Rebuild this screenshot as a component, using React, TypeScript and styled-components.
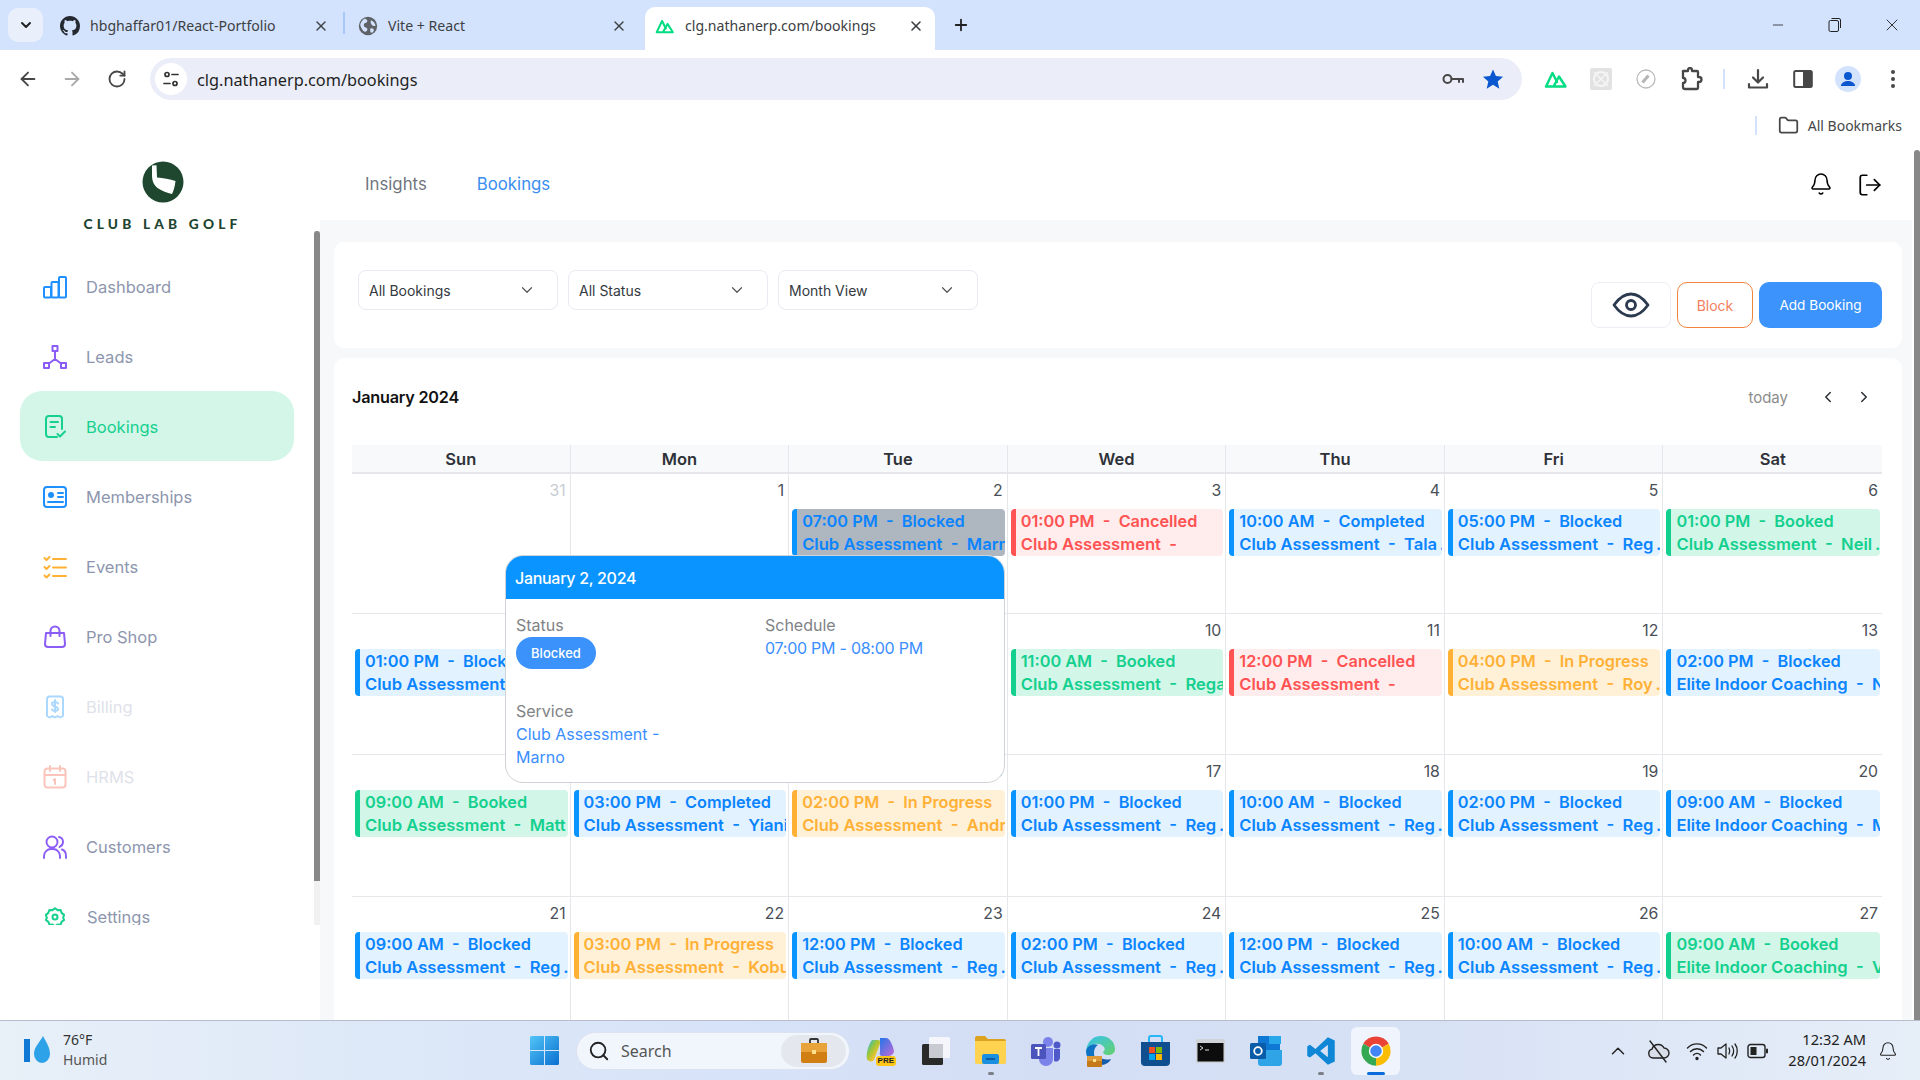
import React from "react";
import styled, { createGlobalStyle } from "styled-components";
import { ArrowLeft, ArrowRight, RotateCw, X, Plus, Minus, ChevronDown, ChevronLeft, ChevronRight, ChevronUp, Bell, LogOut, Search, Folder } from "lucide-react";

const Global = createGlobalStyle`
  html, body { margin: 0; padding: 0; height: 1080px; overflow: hidden; background: #fff; }
  * { box-sizing: border-box; }
  #root { height: 1080px; }
`;

const Screen = styled.div`
  width: 1920px; height: 1080px; display: flex; flex-direction: column; overflow: hidden;
  font-family: "Inter", "Liberation Sans", sans-serif; color: #222;
`;

/* ---------- browser chrome ---------- */
const TabStrip = styled.div`
  height: 50px; background: #d3e3fd; display: flex; align-items: flex-end; flex: none;
  font-family: "Noto Sans", "Liberation Sans", sans-serif;
`;
const TabSearch = styled.div`
  width: 35px; height: 34px; margin: 0 7px 8px 8px; border-radius: 10px; background: #e9f0fc;
  display: flex; align-items: center; justify-content: center; color: #222;
`;
const Tab = styled.div<{ $active?: boolean }>`
  width: 290px; height: 43px; padding: 0 11px 6px 10px; display: flex; align-items: center; gap: 10px;
  border-radius: 10px 10px 0 0; background: ${(p) => (p.$active ? "#fff" : "transparent")};
  margin-left: ${(p) => (p.$active ? "7px" : "0")};
  color: #3c4043; font-size: 14.1px;
`;
const TabIcon = styled.span`
  width: 20px; height: 20px; flex: none; display: flex;
`;
const TabTitle = styled.span`
  flex: 1; white-space: nowrap; overflow: hidden;
`;
const TabDivider = styled.div`
  width: 2px; height: 22px; margin: 0 3px 16px 3px; background: #a8c7fa;
`;
const NewTab = styled.div`
  width: 34px; height: 34px; margin: 0 0 8px 9px; display: flex; align-items: center; justify-content: center; color: #222;
`;
const Spacer = styled.div`
  flex: 1;
`;
const WindowControl = styled.div`
  width: 57px; height: 50px; display: flex; align-items: center; justify-content: center; color: #222; align-self: flex-start;
`;
const Toolbar = styled.div`
  height: 56px; flex: none; background: #fff; display: flex; align-items: center; padding: 2px 5px 0 6px;
  border-radius: 9px 9px 0 0; margin-top: 0;
  font-family: "Noto Sans", "Liberation Sans", sans-serif;
`;
const ToolSlot = styled.div<{ $w?: number }>`
  width: ${(p) => p.$w ?? 45}px; height: 40px; flex: none; display: flex; align-items: center; justify-content: center; color: #474747;
`;
const Omnibox = styled.div`
  flex: 1; height: 42px; margin: 0 11px 0 10px; background: #ebeef8; border-radius: 21px;
  display: flex; align-items: center; padding: 0 9px 0 5px; color: #1f1f1f; font-size: 16.3px;
`;
const SiteChip = styled.span`
  width: 32px; height: 32px; border-radius: 50%; background: #fff; display: flex; align-items: center; justify-content: center; margin-right: 10px;
`;
const UrlText = styled.span`
  flex: 1; padding-top: 2px;
`;
const OmniIcon = styled.span`
  width: 40px; display: flex; justify-content: center;
`;
const ToolDivider = styled.div`
  width: 2px; height: 20px; background: #d3e3fd;
`;
const BookmarkBar = styled.div`
  height: 34px; flex: none; background: #fff; display: flex; align-items: center; justify-content: flex-end; padding: 4px 18px 0 0;
  font-family: "Noto Sans", "Liberation Sans", sans-serif; font-size: 14px; color: #474747; gap: 9px;
`;
const BookmarkDivider = styled.div`
  width: 2px; height: 19px; background: #d3e3fd; margin-right: 12px;
`;

/* ---------- app ---------- */
const Page = styled.div`
  flex: 1; min-height: 0; display: flex; background: #fff;
`;
const Sidebar = styled.aside`
  width: 320px; flex: none; display: flex; flex-direction: column; background: #fff;
`;
const Brand = styled.div`
  height: 91px; flex: none; display: flex; flex-direction: column; align-items: center; padding: 21px 0 0 5px;
`;
const BrandName = styled.div`
  margin-top: 14px; font-family: "Lato", "Liberation Sans", sans-serif; font-weight: 900; font-size: 13.7px; letter-spacing: 4.2px; color: #214530; white-space: nowrap; line-height: 14px;
`;
const NavPane = styled.div`
  height: 694px; display: flex; flex: none;
`;
const Nav = styled.nav`
  width: 314px; overflow: hidden; padding-top: 20px; flex: none;
`;
const NavItem = styled.div<{ $active?: boolean; $muted?: boolean; $gap?: number }>`
  height: 70px; margin: 0 20px; padding: 2px 0 0 23px; display: flex; align-items: center; gap: ${(p) => p.$gap ?? 19}px;
  border-radius: 22px; font-size: 16.5px;
  background: ${(p) => (p.$active ? "#d3f6e9" : "transparent")};
  color: ${(p) => (p.$active ? "#16d08e" : p.$muted ? "#dfe2ea" : "#8d96ae")};
`;
const NavIcon = styled.span`
  width: 24px; height: 24px; flex: none; display: flex; align-items: center; justify-content: center;
`;
const ScrollTrack = styled.div`
  width: 6px; flex: none; background: #f1f1f1;
`;
const ScrollThumb = styled.div<{ $h: number }>`
  width: 6px; height: ${(p) => p.$h}px; background: #888; border-radius: 3px 3px 0 0;
`;
const Main = styled.main`
  flex: 1; min-width: 0; display: flex; flex-direction: column; overflow: hidden;
`;
const TopNav = styled.header`
  height: 80px; flex: none; background: #fff; display: flex; align-items: center; padding: 7px 29px 0 45px; gap: 50px; font-size: 16.8px;
`;
const TopLink = styled.span<{ $active?: boolean }>`
  color: ${(p) => (p.$active ? "#3a8ef0" : "#6f7680")};
`;
const TopIcons = styled.div`
  margin: 3px 0 0 auto; display: flex; gap: 24px; color: #000;
`;
const Body = styled.div`
  flex: 1; min-height: 0; background: #f7f8fa; padding: 22px 10px 0 14px; display: flex; flex-direction: column; gap: 10px;
`;
const FilterCard = styled.section`
  height: 106px; flex: none; background: #fff; border-radius: 10px; padding: 28px 20px 0 24px; display: flex; align-items: flex-start; gap: 10px;
`;
const SelectBox = styled.div`
  width: 200px; height: 40px; border: 1px solid #e8eaf1; border-radius: 8px; display: flex; align-items: center; justify-content: space-between;
  padding: 0 21px 0 10px; font-size: 14px; color: #343a40;
`;
const Actions = styled.div`
  margin: 12px 0 0 auto; display: flex; gap: 6px;
`;
const EyeButton = styled.div`
  width: 80px; height: 46px; border: 1px solid #eceef3; border-radius: 8px; display: flex; align-items: center; justify-content: center;
`;
const BlockButton = styled.div`
  width: 76px; height: 46px; border: 1px solid #f2853d; border-radius: 10px; display: flex; align-items: center; justify-content: center; font-size: 14px; color: #f37f5f;
`;
const AddButton = styled.div`
  width: 123px; height: 46px; border-radius: 10px; background: #3b93fb; display: flex; align-items: center; justify-content: center; font-size: 13.6px; color: #fff;
`;
const CalendarCard = styled.section`
  position: relative; flex: 1; background: #fff; border-radius: 10px 10px 0 0; padding: 24px 20px 0 18px; overflow: hidden;
`;
const CalendarBar = styled.div`
  height: 30px; display: flex; align-items: center; margin-bottom: 33px;
`;
const MonthTitle = styled.h2`
  margin: 0; font-size: 16.2px; font-weight: 600; color: #111; letter-spacing: -0.2px;
`;
const CalendarNav = styled.div`
  margin-left: auto; display: flex; align-items: center; color: #2b2f36; font-size: 15px;
`;
const TodayText = styled.span`
  color: #8d8d8d; margin-right: 22px;
`;
const NavArrow = styled.span`
  width: 36px; display: flex; justify-content: center;
`;
const Month = styled.div`
  display: grid; grid-template-columns: repeat(7, minmax(0, 1fr));
`;
const DayHead = styled.div`
  height: 29px; background: #f8f9fb; border-bottom: 2px solid #e5e7eb; border-right: 1px solid #e5e7eb;
  display: flex; align-items: center; justify-content: center; font-size: 16.5px; font-weight: 600; color: #2e3238;
  &:nth-child(7) { border-right: none; }
`;
const DayCell = styled.div<{ $h: number; $last?: boolean }>`
  height: ${(p) => p.$h}px; border-bottom: 1px solid #e5e7eb; border-right: ${(p) => (p.$last ? "none" : "1px solid #e5e7eb")};
  padding: 0 2px 0 3px; min-width: 0; overflow: hidden;
`;
const DayNumber = styled.div<{ $muted?: boolean }>`
  height: 35px; line-height: 34px; text-align: right; padding-right: 2px; font-size: 15.8px; font-weight: 400;
  color: ${(p) => (p.$muted ? "#c9ccd1" : "#4a4f57")};
`;
const toneMap = {
  blue: { bar: "#0a94ff", bg: "#e3f2ff", fg: "#0a84ff" },
  green: { bar: "#14d08f", bg: "#d2f6e8", fg: "#14d08f" },
  red: { bar: "#ff5252", bg: "#ffecec", fg: "#ff5252" },
  orange: { bar: "#ffb136", bg: "#fff0d8", fg: "#ffb136" },
  selected: { bar: "#0a94ff", bg: "#aeb6bf", fg: "#0a84ff" },
};
type Tone = keyof typeof toneMap;
const EventChip = styled.div<{ $tone: Tone }>`
  height: 47px; border-left: 5px solid ${(p) => toneMap[p.$tone].bar}; background: ${(p) => toneMap[p.$tone].bg}; color: ${(p) => toneMap[p.$tone].fg};
  border-radius: 4px; padding: 1px 0 0 5px; font-size: 16.3px; font-weight: 600; line-height: 23px; white-space: pre; overflow: hidden;
`;
const EventService = styled.div`
  font-size: 16.6px;
`;
const Popover = styled.div`
  position: absolute; left: 171px; top: 197px; width: 500px; height: 228px; background: #fff; border: 1px solid #cfd2d6; border-radius: 18px; overflow: hidden;
`;
const PopHead = styled.div`
  height: 43px; background: #0a94ff; color: #fff; font-size: 16px; font-weight: 500; display: flex; align-items: center; padding-left: 9px; letter-spacing: -0.3px;
`;
const PopBody = styled.div`
  display: grid; grid-template-columns: 249px 1fr; padding: 15px 9px 0 10px; font-size: 16px; line-height: 23px; font-weight: 400; color: #3b8eff;
`;
const PopField = styled.div<{ $span?: boolean }>`
  width: ${(p) => (p.$span ? "170px" : "auto")};
  margin-top: ${(p) => (p.$span ? "31px" : "0")};
`;
const PopLabel = styled.div`
  color: #808285;
`;
const ScheduleTime = styled.span`
  letter-spacing: -0.25px;
`;
const StatusPill = styled.span`
  display: flex; align-items: center; justify-content: center; width: 80px; height: 32px; border-radius: 16px; background: #3b92fb; color: #fff; font-size: 13px; font-weight: 500;
`;
const PageScroll = styled.div`
  width: 8px; flex: none; background: #fff; padding: 10px 0 0 2px;
`;

/* ---------- taskbar ---------- */
const Taskbar = styled.footer`
  height: 60px; flex: none; border-top: 1px solid #b7bdcd; display: grid; grid-template-columns: 517px auto 1fr; align-items: center;
  background: linear-gradient(90deg, #e8f0f8 0%, #dde8f8 20%, #d6e2f8 40%, #d3ddf4 55%, #d8e2f5 75%, #e6eef8 100%);
  font-family: "Noto Sans", "Liberation Sans", sans-serif; color: #222;
`;
const Weather = styled.div`
  display: flex; align-items: center; gap: 9px; padding-left: 24px;
`;
const WeatherText = styled.div`
  font-size: 14px; line-height: 20px; color: #333; padding-bottom: 2px;
`;
const WeatherSub = styled.div`
  color: #555;
`;
const TaskCenter = styled.div`
  display: flex; align-items: center;
`;
const TaskSlot = styled.div<{ $active?: boolean; $w?: number }>`
  position: relative; width: ${(p) => p.$w ?? 55}px; height: 48px; display: flex; align-items: center; justify-content: center;
  &::before { content: ""; position: absolute; left: 3px; right: 3px; top: 0; bottom: 0; border-radius: 6px; background: ${(p) => (p.$active ? "#f0f4fc" : "transparent")}; }
  & > * { position: relative; }
`;
const RunDot = styled.span<{ $wide?: boolean }>`
  position: absolute !important; bottom: 0px; left: 50%; transform: translateX(-50%); width: ${(p) => (p.$wide ? 18 : 6)}px; height: 3px; border-radius: 2px; background: ${(p) => (p.$wide ? "#0a6cdc" : "#7b7f87")};
`;
const SearchPill = styled.div`
  width: 274px; height: 38px; margin-left: 4px; border-radius: 19px; background: #f1f5fc; border: 1px solid #dce3f0; display: flex; align-items: center; padding: 0 3px 0 11px; font-size: 16px; color: #555; gap: 11px;
`;
const SearchBadge = styled.span`
  margin-left: auto; width: 65px; height: 32px; border-radius: 16px; background: #e4e8ee; display: flex; align-items: center; justify-content: center;
`;
const PreLabel = styled.span`
  position: absolute !important; right: 12px; bottom: 9px; padding: 0 2px; background: #ffc617; border-radius: 3px; font-size: 8px; line-height: 10px; font-weight: 700; color: #222; font-family: "Liberation Sans", sans-serif;
`;
const Tray = styled.div`
  display: flex; align-items: center; justify-content: flex-end; padding-right: 22px;
`;
const TraySlot = styled.div<{ $w: number }>`
  width: ${(p) => p.$w}px; display: flex; justify-content: center; color: #222;
`;
const Clock = styled.div`
  width: 88px; text-align: right; font-size: 14.6px; line-height: 21px; color: #222; margin-right: 12px; white-space: nowrap; padding-bottom: 2px;
`;

/* ---------- icons ---------- */
const s = { fill: "none", strokeLinecap: "round" as const, strokeLinejoin: "round" as const };
const NuxtIcon = ({ size = 20 }: { size?: number }) => (
  <svg width={size} height={size} viewBox="0 0 24 24" {...s} stroke="#00dc82" strokeWidth={2.4}>
    <path d="M8 19.5H2L8.5 6l4.5 9" /><path d="M9.5 19.5l5.5-10 6.5 10z" />
  </svg>
);
const GithubIcon = () => (
  <svg width="20" height="20" viewBox="0 0 16 16" fill="#24292f"><path d="M8 0C3.58 0 0 3.58 0 8c0 3.54 2.29 6.53 5.47 7.59.4.07.55-.17.55-.38 0-.19-.01-.82-.01-1.49-2.01.37-2.53-.49-2.69-.94-.09-.23-.48-.94-.82-1.13-.28-.15-.68-.52-.01-.53.63-.01 1.08.58 1.23.82.72 1.21 1.87.87 2.33.66.07-.52.28-.87.51-1.07-1.78-.2-3.64-.89-3.64-3.95 0-.87.31-1.59.82-2.15-.08-.2-.36-1.02.08-2.12 0 0 .67-.21 2.2.82.64-.18 1.32-.27 2-.27s1.36.09 2 .27c1.53-1.04 2.2-.82 2.2-.82.44 1.1.16 1.92.08 2.12.51.56.82 1.27.82 2.15 0 3.07-1.87 3.75-3.65 3.95.29.25.54.73.54 1.48 0 1.07-.01 1.93-.01 2.2 0 .21.15.46.55.38A8.01 8.01 0 0016 8c0-4.42-3.58-8-8-8z" /></svg>
);
const GlobeFill = () => (
  <svg width="20" height="20" viewBox="0 0 24 24"><circle cx="12" cy="12" r="11" fill="#5f6368" /><path d="M8 3c2 1 4 2 3 4s-4 1-4 4 3 2 4 4-1 4-3 4c-2-1-4-4-5-7s2-7 5-9zM16 5c2 1 5 4 5 7-1 0-3 0-4-1s-3-4-1-6zM15 15c2-1 4 0 4 2s-2 3-3 3-2-3-1-5z" fill="#d3e3fd" /></svg>
);
const TuneIcon = () => (
  <svg width="18" height="18" viewBox="0 0 18 18" {...s} stroke="#333" strokeWidth={1.7}>
    <circle cx="5" cy="4.5" r="2" /><path d="M10 4.5h6" /><circle cx="13" cy="13.5" r="2" /><path d="M2 13.5h6" />
  </svg>
);
const KeyIcon = () => (
  <svg width="24" height="24" viewBox="0 0 24 24" {...s} stroke="#474747" strokeWidth={2}>
    <circle cx="6.5" cy="12" r="4" /><path d="M10.5 12H22v3M18 12v3" />
  </svg>
);
const StarIcon = () => (
  <svg width="22" height="22" viewBox="0 0 24 24" fill="#0b57d0"><path d="M12 1.5l3.2 7.3 7.8.7-5.9 5.2 1.8 7.8L12 18.3l-6.9 4.2 1.8-7.8L1 9.5l7.8-.7z" /></svg>
);
const GrayExt = () => (
  <svg width="22" height="22" viewBox="0 0 22 22"><rect width="22" height="22" rx="2" fill="#e2e2e2" /><circle cx="11" cy="11" r="7" fill="none" stroke="#f5f5f5" strokeWidth="2" /><path d="M4 4l14 14M18 4L4 18" stroke="#f5f5f5" strokeWidth="1.5" /></svg>
);
const CompassExt = () => (
  <svg width="22" height="22" viewBox="0 0 22 22"><circle cx="11" cy="11" r="9" fill="#fff" stroke="#bbb" strokeWidth="1.3" /><path d="M7.5 14.5l6-7" stroke="#b5b5b5" strokeWidth="3" /></svg>
);
const PuzzleIcon = () => (
  <svg width="24" height="24" viewBox="0 0 24 24" {...s} stroke="#474747" strokeWidth={2.3}>
    <path d="M4 4h5V3a2 2 0 014 0v1h5a1 1 0 011 1v5h1a2.500 2.500 0 010 5h-1v6a1 1 0 01-1 1H6a2 2 0 01-2-2v-4a2.500 2.500 0 000-5V5a1 1 0 010-1z" />
  </svg>
);
const DownloadIcon = () => (
  <svg width="24" height="24" viewBox="0 0 24 24" {...s} stroke="#474747" strokeWidth={2.2}>
    <path d="M12 3v12M7 10.5l5 5 5-5M3 17v3.5h18V17" />
  </svg>
);
const PanelIcon = () => (
  <svg width="20" height="20" viewBox="0 0 20 20"><rect x="1.2" y="2" width="17.6" height="16" rx="1.5" fill="#fff" stroke="#474747" strokeWidth="2" /><rect x="10" y="2" width="9" height="16" fill="#474747" /></svg>
);
const ProfileIcon = () => (
  <svg width="26" height="26" viewBox="0 0 26 26"><circle cx="13" cy="13" r="13" fill="#d3e3fd" /><circle cx="13" cy="10" r="4" fill="#0b57d0" /><path d="M5.8 20c.6-3.5 3.8-5 7.2-5s6.600 1.500 7.200 5z" fill="#0b57d0" /></svg>
);
const DotsIcon = () => (
  <svg width="6" height="20" viewBox="0 0 6 20" fill="#474747"><circle cx="3" cy="3" r="2" /><circle cx="3" cy="10" r="2" /><circle cx="3" cy="17" r="2" /></svg>
);
const RestoreIcon = () => (
  <svg width="14" height="16" viewBox="0 0 14 16" fill="none" stroke="#222" strokeWidth="1"><rect x="1" y="3.500" width="9.500" height="11" rx="1.500" /><path d="M3.500 1.500h7.500a1.500 1.500 0 011.500 1.500v8" /></svg>
);
const LogoMark = () => (
  <svg width="42" height="42" viewBox="0 0 42 42"><circle cx="21" cy="21" r="20.500" fill="#1f4730" /><path d="M10 4.500l4.500-.3.500 12.300c6 .5 13 1.500 18.500 3.500-.5 5-2 10-3.500 13-5-1-10-3-14.500-6C12 24 10 20 10 14z" fill="#fff" /></svg>
);
const EyeIcon = () => (
  <svg width="38" height="26" viewBox="0 0 38 26" {...s} stroke="#2b3a4f" strokeWidth={2.8}>
    <path d="M2 13C7 6 12 2 19 2s12 4 17 11c-5 7-10 11-17 11S7 20 2 13z" /><circle cx="19" cy="13" r="4.500" />
  </svg>
);
const ic = (color: string, sw = 2, size = 24) => ({ ...s, stroke: color, strokeWidth: sw, width: size, height: size, viewBox: "0 0 24 24" });
const IconDashboard = () => <svg {...ic("#1e90ff")}><rect x="1" y="12" width="7" height="10.500" rx="1" /><rect x="8.500" y="7" width="7" height="15.500" rx="1" /><rect x="16" y="2" width="7" height="20.500" rx="1" /></svg>;
const IconLeads = () => <svg {...ic("#8b5cf6")}><rect x="9.500" y="1" width="5" height="5" /><rect x="1" y="18" width="5" height="5" /><rect x="18" y="18" width="5" height="5" /><path d="M12 6v8M12 14l-6 4.500M12 14l6 4.500" /></svg>;
const IconBookings = () => <svg {...ic("#16d08e")}><path d="M14 22H6a3 3 0 01-3-3V4a3 3 0 013-3h10a3 3 0 013 3v10" /><path d="M7.500 7H15M7.500 12H12M14.500 19l2.500 2.500 5-5" /></svg>;
const IconMembership = () => <svg {...ic("#1e90ff")}><rect x="1" y="2" width="22" height="20" rx="3" /><circle cx="8" cy="10" r="2" fill="#1e90ff" /><path d="M15 8h5M15 12h5M5 17h15" /></svg>;
const IconEvents = () => <svg {...ic("#ffb136")}><path d="M1.500 3l2 2 3-3M1.500 12l2 2 3-3M1.500 20.500l2 2 3-3M10 4h13M10 12.500h13M10 21h13" /></svg>;
const IconShop = () => <svg {...ic("#8b5cf6")}><path d="M3 8h18l1 11a3 3 0 01-3 3H5a3 3 0 01-3-3zM7.500 11V6a4.500 4.500 0 019 0v5" /></svg>;
const IconBilling = () => <svg {...ic("#aad8ff")}><path d="M4 21V4a2.500 2.500 0 012.500-2.500h11A2.500 2.500 0 0120 4v17l-2.700 1.500-2.700-1.500-2.600 1.500-2.600-1.500-2.700 1.500z" /><path d="M15 8.500c-.5-1-1.500-1.500-3-1.500s-3 .7-3 2 1.500 2 3 2.500 3 1 3 2.500-1.500 2-3 2-2.500-.5-3-1.500M12 5v12" /></svg>;
const IconHrms = () => <svg {...ic("#fbc5bc")}><rect x="1.500" y="3.500" width="21" height="19" rx="3" /><path d="M7 1v5M17 1v5M1.500 10h21M10.500 15l1.500-1v5" /></svg>;
const IconCustomers = () => <svg {...ic("#8b5cf6", 1.900)}><circle cx="9" cy="7" r="5.500" /><path d="M1 23v-2a7 7 0 017-7h2a7 7 0 017 7v2M16 2c2.500.5 4 2.500 4 5s-1.500 4-3.500 5M19 14.500c2.500.8 4 3.500 4 6.500v2" /></svg>;
const IconSettings = () => <svg {...ic("#16d08e", 2.400, 20)}><path d="M12 1.500l3 2.300 3.700-.3 1.200 3.600 3 2.300-1.100 3.600 1.100 2.600-3 2.300-1.200 3.300-3.700-.2-3 2.300-3-2.300-3.700.2-1.200-3.300-3-2.300 1.100-2.600L1 9.400l3-2.300 1.300-3.600 3.700.3z" /><circle cx="12" cy="12" r="3" /></svg>;

const WinIcon = () => (
  <svg width="29" height="29" viewBox="0 0 29 29">
    <defs><linearGradient id="w" x1="0" y1="0" x2="1" y2="1"><stop offset="0" stopColor="#52c5f7" /><stop offset="1" stopColor="#0a6fd0" /></linearGradient></defs>
    <path d="M0 1.500A1.500 1.500 0 011.500 0H14v14H0zM15 0h12.500A1.500 1.500 0 0129 1.500V14H15zM0 15h14v14H1.500A1.500 1.500 0 010 27.500zM15 15h14v12.500a1.500 1.500 0 01-1.500 1.500H15z" fill="url(#w)" />
  </svg>
);
const BriefcaseIcon = ({ size = 28 }: { size?: number }) => (
  <svg width={size} height={size} viewBox="0 0 28 28">
    <rect x="10" y="2" width="8" height="6" rx="1" fill="none" stroke="#333" strokeWidth="1.800" />
    <rect x="1" y="6" width="26" height="20" rx="2" fill="#d17f12" /><rect x="1" y="6" width="26" height="9" fill="#e8a33b" /><rect x="12" y="13" width="4" height="4" fill="#ffe08a" />
  </svg>
);
const CopilotIcon = () => (
  <svg width="30" height="28" viewBox="0 0 30 28">
    <defs><linearGradient id="c" x1="0" y1="0" x2="1" y2="1"><stop offset="0" stopColor="#1eb8e8" /><stop offset=".4" stopColor="#9cc63a" /><stop offset=".7" stopColor="#f4c430" /></linearGradient><linearGradient id="c2" x1="0" y1="0" x2="1" y2="1"><stop offset="0" stopColor="#2076e8" /><stop offset="1" stopColor="#c46ad8" /></linearGradient></defs>
    <path d="M6 3h6c2 0 3 2 2 4l-6 16c-1 2-6 2-7-1-1-5 1-14 5-19z" fill="url(#c)" /><path d="M14 1h6c4 0 7 8 8 13 0 3-3 5-6 5h-6c-2 0-3-2-2-4z" fill="url(#c2)" />
  </svg>
);
const TaskViewIcon = () => (
  <svg width="30" height="30" viewBox="0 0 30 30"><rect x="8" y="1" width="21" height="21" rx="1.500" fill="#f4f6fb" /><rect x="1" y="8" width="21" height="21" rx="1.500" fill="#2a2a2a" /><rect x="8" y="8" width="14" height="14" fill="#c8ccd2" /></svg>
);
const FolderIcon = () => (
  <svg width="31" height="29" viewBox="0 0 31 29"><path d="M0 2a2 2 0 012-2h8l3 3h16a2 2 0 012 2v4H0z" fill="#dda21f" /><path d="M0 5h31v21a2 2 0 01-2 2H2a2 2 0 01-2-2z" fill="#ffd24f" /><rect x="7" y="18" width="17" height="10" rx="2" fill="#1b8fe0" /><path d="M11 23h9" stroke="#0b4d8f" strokeWidth="1.500" /></svg>
);
const TeamsIcon = () => (
  <svg width="30" height="30" viewBox="0 0 30 30"><circle cx="17" cy="6" r="5" fill="#7b83eb" /><circle cx="26" cy="9" r="3.500" fill="#5059c9" /><path d="M8 12h14v11a7 7 0 01-14 0z" fill="#7b83eb" /><path d="M23 13h6v9a4 4 0 01-6 3z" fill="#5059c9" /><rect x="0" y="8" width="15" height="15" rx="1.500" fill="#4b53bc" /><path d="M4 12h7M7.500 12v8" stroke="#fff" strokeWidth="1.800" /></svg>
);
const EdgeIcon = () => (
  <svg width="30" height="32" viewBox="0 0 30 32">
    <defs><linearGradient id="e" x1="0" y1="0" x2="1" y2="1"><stop offset="0" stopColor="#35c1f1" /><stop offset="1" stopColor="#66d26b" /></linearGradient></defs>
    <path d="M15 1c8 0 14 6 14 13 0 4-3 6-7 6-3 0-5-2-5-3 2-1 2-3 1-5-2-3-6-4-10-3-4 1-7 4-8 7C1 7 7 1 15 1z" fill="url(#e)" /><path d="M0 16c1-5 7-8 12-6-4 2-5 8-3 13l4 7C6 30 0 24 0 16z" fill="#1072c4" /><path d="M14 30c5 0 9-2 11-6-4 1-9 1-12-3z" fill="#155da8" />
    <rect x="1" y="21" width="15" height="11" rx="1" fill="#c47a17" /><rect x="1" y="21" width="15" height="5" fill="#dd9a3a" /><rect x="7" y="24" width="3" height="3" fill="#ffe08a" />
  </svg>
);
const StoreIcon = () => (
  <svg width="29" height="32" viewBox="0 0 29 32"><path d="M8 8V3a2 2 0 012-2h9a2 2 0 012 2v5" fill="none" stroke="#29b6f6" strokeWidth="2" /><path d="M0 7h29v20a4 4 0 01-4 4H4a4 4 0 01-4-4z" fill="#0f4f8f" /><rect x="8" y="12" width="6" height="6" fill="#f25022" /><rect x="15" y="12" width="6" height="6" fill="#7fba00" /><rect x="8" y="19" width="6" height="6" fill="#00a4ef" /><rect x="15" y="19" width="6" height="6" fill="#ffb900" /></svg>
);
const TerminalIcon = () => (
  <svg width="29" height="24" viewBox="0 0 29 24"><rect width="29" height="24" rx="1.500" fill="#cfd3d8" /><rect x="1.500" y="4" width="26" height="18.500" fill="#0c0c0c" /><path d="M4 7l3 2-3 2M9 11h4" stroke="#ddd" fill="none" strokeWidth="1" /></svg>
);
const OutlookIcon = () => (
  <svg width="32" height="30" viewBox="0 0 32 30"><rect x="8" y="0" width="22" height="15" fill="#0f78d4" /><rect x="19" y="0" width="12" height="8" fill="#28a8ea" /><path d="M8 14h24v13a3 3 0 01-3 3H11a3 3 0 01-3-3z" fill="#2fa4e7" /><rect x="0" y="7" width="16" height="16" rx="1.500" fill="#0a5ca8" /><circle cx="8" cy="15" r="3.800" fill="none" stroke="#fff" strokeWidth="1.800" /></svg>
);
const VsCodeIcon = () => (
  <svg width="30" height="32" viewBox="0 0 24 24"><path d="M17.500 1L23 3.600v16.800L17.500 23 7.500 13.700l-4.300 3.400L1 15.900V8.100l2.200-1.200 4.300 3.400zM17.500 7l-6.200 5 6.200 5z" fill="#0f86d6" /></svg>
);
const ChromeIcon = () => (
  <svg width="32" height="32" viewBox="0 0 24 24">
    <path d="M12 12L2.500 6.500A11 11 0 0121.500 6.500z" fill="#ea4335" /><path d="M12 12L2.500 6.500A11 11 0 0012 23z" fill="#34a853" /><path d="M12 12l9.500-5.500A11 11 0 0112 23z" fill="#fbbc04" />
    <circle cx="12" cy="12" r="5.400" fill="#fff" /><circle cx="12" cy="12" r="4.300" fill="#4285f4" />
  </svg>
);
const DropIcon = () => (
  <svg width="30" height="30" viewBox="0 0 30 30"><rect x="0" y="3" width="6" height="23" fill="#0f78d4" /><path d="M19 0c3 6 7 11 7 18a8 9 0 01-16 0c0-7 6-12 9-18z" fill="#2da2e8" /></svg>
);
const CloudOff = () => (
  <svg width="24" height="24" viewBox="0 0 24 24" {...s} stroke="#222" strokeWidth={1.400}><path d="M7 19a4.500 4.500 0 01-1-8.800A6.500 6.500 0 0118 9a5 5 0 010 10z" fill="#d8dee8" /><path d="M4 2l16 21" /></svg>
);
const WifiIcon = () => (
  <svg width="22" height="22" viewBox="0 0 22 22" {...s} stroke="#222" strokeWidth={1.400}><path d="M1.500 8a13 13 0 0119 0M4.500 11.500a9 9 0 0113 0M7.500 15a5 5 0 017 0" /><circle cx="11" cy="18.500" r="1" fill="#222" /></svg>
);
const VolumeIcon = () => (
  <svg width="22" height="22" viewBox="0 0 22 22" {...s} stroke="#222" strokeWidth={1.300}><path d="M2 8h3l5-4v14l-5-4H2zM13 8c1 2 1 4 0 6M16 6c2 3 2 7 0 10M19 4c3 4 3 10 0 14" /></svg>
);
const BatteryIcon = () => (
  <svg width="22" height="16" viewBox="0 0 22 16"><rect x="1" y="1.500" width="17" height="13" rx="2.500" fill="none" stroke="#222" strokeWidth="1.400" /><rect x="3.500" y="4" width="6" height="8" fill="#222" /><rect x="19" y="5.500" width="2" height="5" rx="1" fill="#222" /></svg>
);

/* ---------- data ---------- */
type Ev = { tone: Tone; time: string; status: string; service: string };
type Day = { n: number; muted?: boolean; ev?: Ev };
const CA = "Club Assessment  -  ";
const EI = "Elite Indoor Coaching  -  ";
const ev = (tone: Tone, time: string, status: string, service: string): Ev => ({ tone, time, status, service });
const REG = CA + "Reg\u2009.";
const weeks: Day[][] = [
  [
    { n: 31, muted: true }, { n: 1 },
    { n: 2, ev: ev("selected", "07:00 PM", "Blocked", CA + "Marno") },
    { n: 3, ev: ev("red", "01:00 PM", "Cancelled", CA) },
    { n: 4, ev: ev("blue", "10:00 AM", "Completed", CA + "Tala\u2009.") },
    { n: 5, ev: ev("blue", "05:00 PM", "Blocked", REG) },
    { n: 6, ev: ev("green", "01:00 PM", "Booked", CA + "Neil\u2009.") },
  ],
  [
    { n: 7, ev: ev("blue", "01:00 PM", "Blocked", CA) }, { n: 8 }, { n: 9 },
    { n: 10, ev: ev("green", "11:00 AM", "Booked", CA + "Regan") },
    { n: 11, ev: ev("red", "12:00 PM", "Cancelled", CA) },
    { n: 12, ev: ev("orange", "04:00 PM", "In Progress", CA + "Roy\u2009.") },
    { n: 13, ev: ev("blue", "02:00 PM", "Blocked", EI + "N") },
  ],
  [
    { n: 14, ev: ev("green", "09:00 AM", "Booked", CA + "Matt") },
    { n: 15, ev: ev("blue", "03:00 PM", "Completed", CA + "Yiani") },
    { n: 16, ev: ev("orange", "02:00 PM", "In Progress", CA + "Andr") },
    { n: 17, ev: ev("blue", "01:00 PM", "Blocked", REG) },
    { n: 18, ev: ev("blue", "10:00 AM", "Blocked", REG) },
    { n: 19, ev: ev("blue", "02:00 PM", "Blocked", REG) },
    { n: 20, ev: ev("blue", "09:00 AM", "Blocked", EI + "M") },
  ],
  [
    { n: 21, ev: ev("blue", "09:00 AM", "Blocked", REG) },
    { n: 22, ev: ev("orange", "03:00 PM", "In Progress", CA + "Kobu") },
    { n: 23, ev: ev("blue", "12:00 PM", "Blocked", REG) },
    { n: 24, ev: ev("blue", "02:00 PM", "Blocked", REG) },
    { n: 25, ev: ev("blue", "12:00 PM", "Blocked", REG) },
    { n: 26, ev: ev("blue", "10:00 AM", "Blocked", REG) },
    { n: 27, ev: ev("green", "09:00 AM", "Booked", EI + "V") },
  ],
];
const rowHeights = [140, 141, 142, 141];
const nav = [
  { label: "Dashboard", icon: <IconDashboard /> },
  { label: "Leads", icon: <IconLeads /> },
  { label: "Bookings", icon: <IconBookings />, active: true },
  { label: "Memberships", icon: <IconMembership /> },
  { label: "Events", icon: <IconEvents /> },
  { label: "Pro Shop", icon: <IconShop /> },
  { label: "Billing", icon: <IconBilling />, muted: true },
  { label: "HRMS", icon: <IconHrms />, muted: true },
  { label: "Customers", icon: <IconCustomers /> },
  { label: "Settings", icon: <IconSettings />, gap: 20 },
];

export default function App() {
  return (
    <Screen>
      <Global />
      <TabStrip>
        <TabSearch><ChevronDown size={16} strokeWidth={3} /></TabSearch>
        <Tab><TabIcon><GithubIcon /></TabIcon><TabTitle>hbghaffar01/React-Portfolio</TabTitle><X size={16} strokeWidth={2} /></Tab>
        <TabDivider />
        <Tab><TabIcon><GlobeFill /></TabIcon><TabTitle>Vite + React</TabTitle><X size={16} strokeWidth={2} /></Tab>
        <Tab $active><TabIcon><NuxtIcon /></TabIcon><TabTitle>clg.nathanerp.com/bookings</TabTitle><X size={16} strokeWidth={2.4} /></Tab>
        <NewTab><Plus size={18} strokeWidth={2.4} /></NewTab>
        <Spacer />
        <WindowControl><Minus size={16} strokeWidth={1.2} /></WindowControl>
        <WindowControl><RestoreIcon /></WindowControl>
        <WindowControl><X size={20} strokeWidth={1.1} /></WindowControl>
      </TabStrip>
      <Toolbar>
        <ToolSlot $w={44}><ArrowLeft size={22} strokeWidth={2} /></ToolSlot>
        <ToolSlot $w={44}><ArrowRight size={22} strokeWidth={2} color="#a9a9a9" /></ToolSlot>
        <ToolSlot $w={46}><RotateCw size={20} strokeWidth={2.2} /></ToolSlot>
        <Omnibox>
          <SiteChip><TuneIcon /></SiteChip>
          <UrlText>clg.nathanerp.com/bookings</UrlText>
          <OmniIcon><KeyIcon /></OmniIcon>
          <OmniIcon><StarIcon /></OmniIcon>
        </Omnibox>
        <ToolSlot><NuxtIcon size={24} /></ToolSlot>
        <ToolSlot><GrayExt /></ToolSlot>
        <ToolSlot><CompassExt /></ToolSlot>
        <ToolSlot><PuzzleIcon /></ToolSlot>
        <ToolSlot $w={22}><ToolDivider /></ToolSlot>
        <ToolSlot><DownloadIcon /></ToolSlot>
        <ToolSlot><PanelIcon /></ToolSlot>
        <ToolSlot><ProfileIcon /></ToolSlot>
        <ToolSlot><DotsIcon /></ToolSlot>
      </Toolbar>
      <BookmarkBar>
        <BookmarkDivider />
        <Folder size={21} strokeWidth={2} />
        All Bookmarks
      </BookmarkBar>
      <Page>
        <Sidebar>
          <Brand>
            <LogoMark />
            <BrandName>CLUB LAB GOLF</BrandName>
          </Brand>
          <NavPane>
            <Nav>
              {nav.map((n) => (
                <NavItem key={n.label} $active={n.active} $muted={n.muted} $gap={n.gap}>
                  <NavIcon>{n.icon}</NavIcon>
                  {n.label}
                </NavItem>
              ))}
            </Nav>
            <ScrollTrack><ScrollThumb $h={650} /></ScrollTrack>
          </NavPane>
        </Sidebar>
        <Main>
          <TopNav>
            <TopLink>Insights</TopLink>
            <TopLink $active>Bookings</TopLink>
            <TopIcons>
              <Bell size={24} strokeWidth={1.5} />
              <LogOut size={26} strokeWidth={1.6} />
            </TopIcons>
          </TopNav>
          <Body>
            <FilterCard>
              <SelectBox>All Bookings<ChevronDown size={18} strokeWidth={1.6} color="#555" /></SelectBox>
              <SelectBox>All Status<ChevronDown size={18} strokeWidth={1.6} color="#555" /></SelectBox>
              <SelectBox>Month View<ChevronDown size={18} strokeWidth={1.6} color="#555" /></SelectBox>
              <Actions>
                <EyeButton><EyeIcon /></EyeButton>
                <BlockButton>Block</BlockButton>
                <AddButton>Add Booking</AddButton>
              </Actions>
            </FilterCard>
            <CalendarCard>
              <CalendarBar>
                <MonthTitle>January 2024</MonthTitle>
                <CalendarNav>
                  <TodayText>today</TodayText>
                  <NavArrow><ChevronLeft size={18} /></NavArrow>
                  <NavArrow><ChevronRight size={18} /></NavArrow>
                </CalendarNav>
              </CalendarBar>
              <Month>
                {["Sun", "Mon", "Tue", "Wed", "Thu", "Fri", "Sat"].map((d) => <DayHead key={d}>{d}</DayHead>)}
                {weeks.map((week, i) =>
                  week.map((day, j) => (
                    <DayCell key={day.n} $h={rowHeights[i]} $last={j === 6}>
                      <DayNumber $muted={day.muted}>{day.n}</DayNumber>
                      {day.ev && (
                        <EventChip $tone={day.ev.tone}>
                          {day.ev.time}{"  -  "}{day.ev.status}
                          <EventService>{day.ev.service}</EventService>
                        </EventChip>
                      )}
                    </DayCell>
                  ))
                )}
              </Month>
              <Popover>
                <PopHead>January 2, 2024</PopHead>
                <PopBody>
                  <PopField>
                    <PopLabel>Status</PopLabel>
                    <StatusPill>Blocked</StatusPill>
                  </PopField>
                  <PopField>
                    <PopLabel>Schedule</PopLabel>
                    <ScheduleTime>07:00 PM - 08:00 PM</ScheduleTime>
                  </PopField>
                  <PopField $span>
                    <PopLabel>Service</PopLabel>
                    Club Assessment - Marno
                  </PopField>
                </PopBody>
              </Popover>
            </CalendarCard>
          </Body>
        </Main>
        <PageScroll><ScrollThumb $h={870} /></PageScroll>
      </Page>
      <Taskbar>
        <Weather>
          <DropIcon />
          <WeatherText>76°F<WeatherSub>Humid</WeatherSub></WeatherText>
        </Weather>
        <TaskCenter>
          <TaskSlot><WinIcon /></TaskSlot>
          <SearchPill>
            <Search size={22} strokeWidth={2} color="#222" />
            Search
            <SearchBadge><BriefcaseIcon /></SearchBadge>
          </SearchPill>
          <TaskSlot $w={3} />
          <TaskSlot><CopilotIcon /><PreLabel>PRE</PreLabel></TaskSlot>
          <TaskSlot><TaskViewIcon /></TaskSlot>
          <TaskSlot><FolderIcon /><RunDot /></TaskSlot>
          <TaskSlot><TeamsIcon /></TaskSlot>
          <TaskSlot><EdgeIcon /></TaskSlot>
          <TaskSlot><StoreIcon /></TaskSlot>
          <TaskSlot><TerminalIcon /></TaskSlot>
          <TaskSlot><OutlookIcon /></TaskSlot>
          <TaskSlot><VsCodeIcon /><RunDot /></TaskSlot>
          <TaskSlot $active><ChromeIcon /><RunDot $wide /></TaskSlot>
        </TaskCenter>
        <Tray>
          <TraySlot $w={40}><ChevronUp size={22} strokeWidth={1.6} /></TraySlot>
          <TraySlot $w={40}><CloudOff /></TraySlot>
          <TraySlot $w={38}><WifiIcon /></TraySlot>
          <TraySlot $w={22}><VolumeIcon /></TraySlot>
          <TraySlot $w={40}><BatteryIcon /></TraySlot>
          <Clock>12:32 AM<br />28/01/2024</Clock>
          <Bell size={20} strokeWidth={1.3} />
        </Tray>
      </Taskbar>
    </Screen>
  );
}
